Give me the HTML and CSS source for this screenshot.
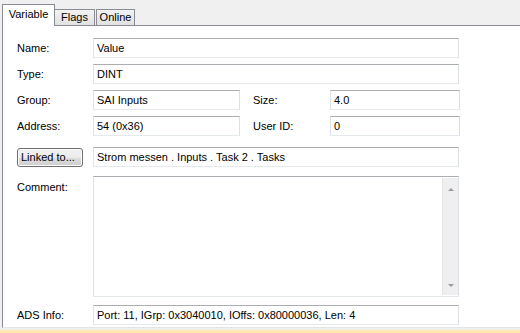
FILE: index.html
```html
<!DOCTYPE html>
<html lang="en">
<head>
    <meta charset="UTF-8">
    <title>Variable</title>
    <link rel="stylesheet" href="styles.css">
</head>
<body>
    <div class="tabs">
        <div class="tab active">Variable</div>
        <div class="tab">Flags</div>
        <div class="tab">Online</div>
    </div>

    <div class="panel">
        <div class="row">
            <span class="label">Name:</span>
            <div class="field wide">Value</div>
        </div>
        <div class="row">
            <span class="label">Type:</span>
            <div class="field wide">DINT</div>
        </div>
        <div class="row">
            <span class="label">Group:</span>
            <div class="field half">SAI Inputs</div>
            <span class="label second">Size:</span>
            <div class="field small">4.0</div>
        </div>
        <div class="row">
            <span class="label">Address:</span>
            <div class="field half">54 (0x36)</div>
            <span class="label second">User ID:</span>
            <div class="field small">0</div>
        </div>

        <div class="row linked">
            <span class="label"><button class="btn">Linked to...</button></span>
            <div class="field wide">Strom messen . Inputs . Task 2 . Tasks</div>
        </div>

        <div class="row comment">
            <span class="label">Comment:</span>
            <div class="field wide memo">
                <div class="scrollbar">
                    <span class="arrow up"></span>
                    <span class="arrow down"></span>
                </div>
            </div>
        </div>

        <div class="row">
            <span class="label">ADS Info:</span>
            <div class="field wide">Port: 11, IGrp: 0x3040010, IOffs: 0x80000036, Len: 4</div>
        </div>
    </div>

    <div class="statusbar"></div>
</body>
</html>
```

FILE: styles.css
```css
* {
    margin: 0;
    padding: 0;
    box-sizing: border-box;
}

body {
    font-family: 'Liberation Sans', Arial, sans-serif;
    font-size: 11px;
    color: #000;
    background: #f0f0f0;
    width: 520px;
    height: 333px;
    overflow: hidden;
}

/* onglets */
.tabs {
    display: flex;
    align-items: flex-end;
    height: 25px;
    padding-left: 2px;
}

.tab {
    height: 16px;
    line-height: 15px;
    text-align: center;
    border: 1px solid #898c95;
    border-bottom: none;
    background: linear-gradient(#f2f2f2, #e1e1e1);
    margin-left: 1px;
    width: 39px;
}

.tab.active {
    position: relative;
    z-index: 1;
    width: 53px;
    height: 22px;
    line-height: 19px;
    margin-left: 0;
    margin-bottom: -1px;
    background: #fff;
}

.tab.active + .tab {
    margin-left: -1px;
    width: 41px;
}

.panel {
    margin-left: 2px;
    height: 303px;
    background: #fff;
    border-top: 1px solid #898c95;
    border-left: 1px solid #898c95;
    border-bottom: 1px solid #e3e3e3;
    padding: 12px 0 0 14px;
}

.row {
    display: flex;
    align-items: center;
    height: 20px;
    margin-bottom: 6px;
}

.label {
    width: 76px;
    flex-shrink: 0;
}

.label.second {
    width: 77px;
    margin-left: 13px;
}

.field {
    height: 20px;
    line-height: 18px;
    padding: 0 3px;
    border: 1px solid;
    border-color: #abadb3 #dbdfe6 #e3e9ef #e2e3ea;
    white-space: nowrap;
    overflow: hidden;
}

.field.wide {
    width: 366px;
}

.field.half {
    width: 147px;
}

.field.small {
    width: 130px;
}

.row.linked {
    margin-top: 11px;
    margin-bottom: 9px;
}

.btn {
    font: inherit;
    width: 66px;
    height: 19px;
    text-align: left;
    padding-left: 3px;
    border: 1px solid #707070;
    border-radius: 3px;
    background: linear-gradient(#f2f2f2 0%, #ebebeb 50%, #dddddd 51%, #cfcfcf 100%);
    box-shadow: inset 0 0 0 1px #fcfcfc;
}

.row.comment {
    align-items: flex-start;
    height: 121px;
    margin-bottom: 8px;
}

.row.comment .label {
    padding-top: 5px;
}

.field.memo {
    height: 121px;
    display: flex;
    justify-content: flex-end;
    padding: 1px 0 1px 0;
}

.scrollbar {
    width: 16px;
    height: 100%;
    background: #efefef;
    border-left: 1px solid #e6e6e6;
    display: flex;
    flex-direction: column;
    justify-content: space-between;
    align-items: center;
    padding: 10px 0 8px;
}

.arrow {
    width: 0;
    height: 0;
    border-left: 3px solid transparent;
    border-right: 3px solid transparent;
}

.arrow.up {
    border-bottom: 3px solid #9a9a9a;
}

.arrow.down {
    border-top: 3px solid #9a9a9a;
}

.statusbar {
    margin-top: 2px;
    height: 4px;
    background: #fde9ac;
}
```
